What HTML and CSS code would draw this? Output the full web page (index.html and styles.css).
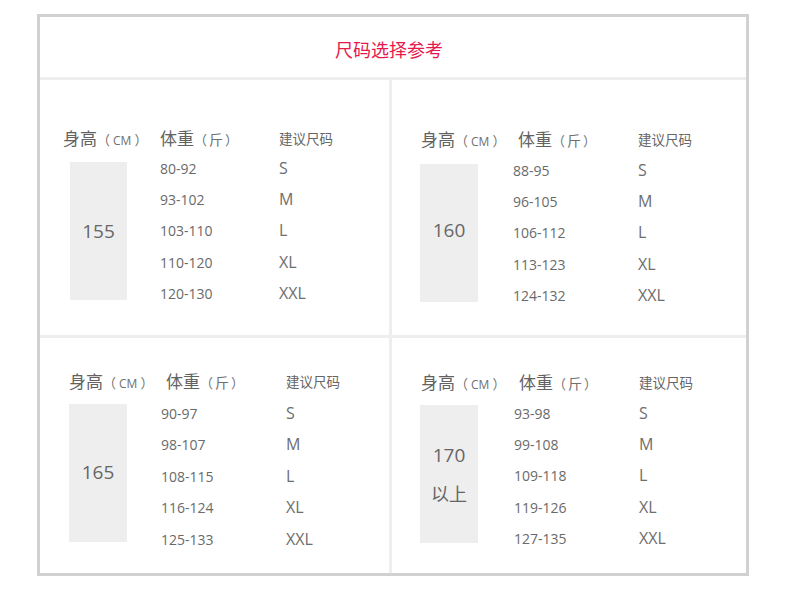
FILE: index.html
```html
<!DOCTYPE html>
<html lang="zh-CN">
<head>
<meta charset="utf-8">
<title>尺码选择参考</title>
<link rel="stylesheet" href="styles.css">
</head>
<body>
<main class="chart">
  <h1 class="chart-title">尺码选择参考</h1>
  <div class="grid">
    <section class="cell cell-a">
      <span class="head head-height">身高<small>（<span class="unit">CM</span>）</small></span>
      <span class="head head-weight">体重<small>（<span class="unit-cjk">斤</span>）</small></span>
      <span class="head head-size">建议尺码</span>
      <div class="hbox">155</div>
      <span class="w">80-92</span><span class="s">S</span>
      <span class="w">93-102</span><span class="s">M</span>
      <span class="w">103-110</span><span class="s">L</span>
      <span class="w">110-120</span><span class="s">XL</span>
      <span class="w">120-130</span><span class="s">XXL</span>
    </section>
    <section class="cell cell-b">
      <span class="head head-height">身高<small>（<span class="unit">CM</span>）</small></span>
      <span class="head head-weight">体重<small>（<span class="unit-cjk">斤</span>）</small></span>
      <span class="head head-size">建议尺码</span>
      <div class="hbox">160</div>
      <span class="w">88-95</span><span class="s">S</span>
      <span class="w">96-105</span><span class="s">M</span>
      <span class="w">106-112</span><span class="s">L</span>
      <span class="w">113-123</span><span class="s">XL</span>
      <span class="w">124-132</span><span class="s">XXL</span>
    </section>
    <section class="cell cell-c">
      <span class="head head-height">身高<small>（<span class="unit">CM</span>）</small></span>
      <span class="head head-weight">体重<small>（<span class="unit-cjk">斤</span>）</small></span>
      <span class="head head-size">建议尺码</span>
      <div class="hbox">165</div>
      <span class="w">90-97</span><span class="s">S</span>
      <span class="w">98-107</span><span class="s">M</span>
      <span class="w">108-115</span><span class="s">L</span>
      <span class="w">116-124</span><span class="s">XL</span>
      <span class="w">125-133</span><span class="s">XXL</span>
    </section>
    <section class="cell cell-d">
      <span class="head head-height">身高<small>（<span class="unit">CM</span>）</small></span>
      <span class="head head-weight">体重<small>（<span class="unit-cjk">斤</span>）</small></span>
      <span class="head head-size">建议尺码</span>
      <div class="hbox hbox-two"><span>170</span><span class="hbox-cjk">以上</span></div>
      <span class="w">93-98</span><span class="s">S</span>
      <span class="w">99-108</span><span class="s">M</span>
      <span class="w">109-118</span><span class="s">L</span>
      <span class="w">119-126</span><span class="s">XL</span>
      <span class="w">127-135</span><span class="s">XXL</span>
    </section>
  </div>
</main>
</body>
</html>
```
FILE: styles.css
```css
* { box-sizing: border-box; }

body {
  margin: 0;
  padding: 14px 0 0 37px;
  background: #ffffff;
  font-family: "Open Sans", "Noto Sans CJK SC", sans-serif;
  color: #666666;
}

.chart {
  width: 712px;
  border: 3px solid #d1d1d1;
  background: #ffffff;
}

.chart-title {
  margin: 0;
  height: 63px;
  padding: 20px 8px 0 0;
  border-bottom: 3px solid #eeeeee;
  text-align: center;
  font-family: "Noto Sans CJK SC", sans-serif;
  font-size: 18px;
  line-height: 24px;
  font-weight: 400;
  color: #e6194b;
}

.grid {
  display: grid;
  grid-template-columns: 349px 354px;
  grid-template-rows: 255px 235px;
  gap: 3px;
  background: #eeeeee;
}

.cell {
  background: #ffffff;
  display: grid;
  grid-template-columns: var(--c1) var(--c2) 1fr;
  grid-template-rows: var(--head) repeat(5, 31.4px);
  align-content: start;
  padding: var(--pt) 0 0 var(--pl);
}

.cell-a { --pl: 23px; --pt: 47.5px; --c1: 97px; --c2: 119px; --head: 25px; --box-ml: 7px; --box-w: 57px; --hw: 0px; --box-mb: 0px; --box-pb: 0px; }
.cell-b { --pl: 29px; --pt: 48.5px; --c1: 92px; --c2: 125px; --head: 26px; --box-ml: -1px; --box-w: 58px; --hw: 5px; --box-mb: 0px; --box-pb: 6px; }
.cell-c { --pl: 29px; --pt: 33px; --c1: 92px; --c2: 125px; --head: 27px; --box-ml: 0px; --box-w: 58px; --hw: 5px; --box-mb: 6px; --box-pb: 2px; }
.cell-d { --pl: 29px; --pt: 34px; --c1: 93px; --c2: 125px; --head: 25.5px; --box-ml: -1px; --box-w: 58px; --hw: 5px; --box-mb: 3px; --box-pb: 0px; }

.head {
  grid-row: 1;
  align-self: start;
  height: 20px;
  line-height: 20px;
  font-family: "Noto Sans CJK SC", sans-serif;
  font-size: 17px;
  color: #626262;
  white-space: nowrap;
}

.head small {
  font-size: 13px;
  color: #707070;
}

.head .unit {
  display: inline-block;
  padding: 0 3px;
  font-family: "Open Sans", sans-serif;
  font-size: 12px;
}

.head .unit-cjk {
  display: inline-block;
  padding: 0 2px;
  font-size: 14px;
}

.head-height { grid-column: 1; }
.head-weight { grid-column: 2; padding-left: var(--hw); }
.head-size { grid-column: 3; font-size: 13.5px; color: #666666; }

.hbox {
  grid-column: 1;
  grid-row: 2 / span 5;
  align-self: center;
  margin-left: var(--box-ml);
  margin-bottom: var(--box-mb);
  padding-bottom: var(--box-pb);
  width: var(--box-w);
  height: 138px;
  background: #eeeeee;
  display: flex;
  flex-direction: column;
  align-items: center;
  justify-content: center;
  font-size: 19px;
  color: #666666;
}

.hbox-two { line-height: 38px; }

.hbox-cjk {
  font-family: "Noto Sans CJK SC", sans-serif;
  font-size: 18px;
}

.w,
.s {
  line-height: 31.4px;
  white-space: nowrap;
}

.w {
  grid-column: 2;
  font-size: 14px;
  color: #6a6a6a;
}

.s {
  grid-column: 3;
  font-size: 16px;
  color: #6e6e6e;
}
```
